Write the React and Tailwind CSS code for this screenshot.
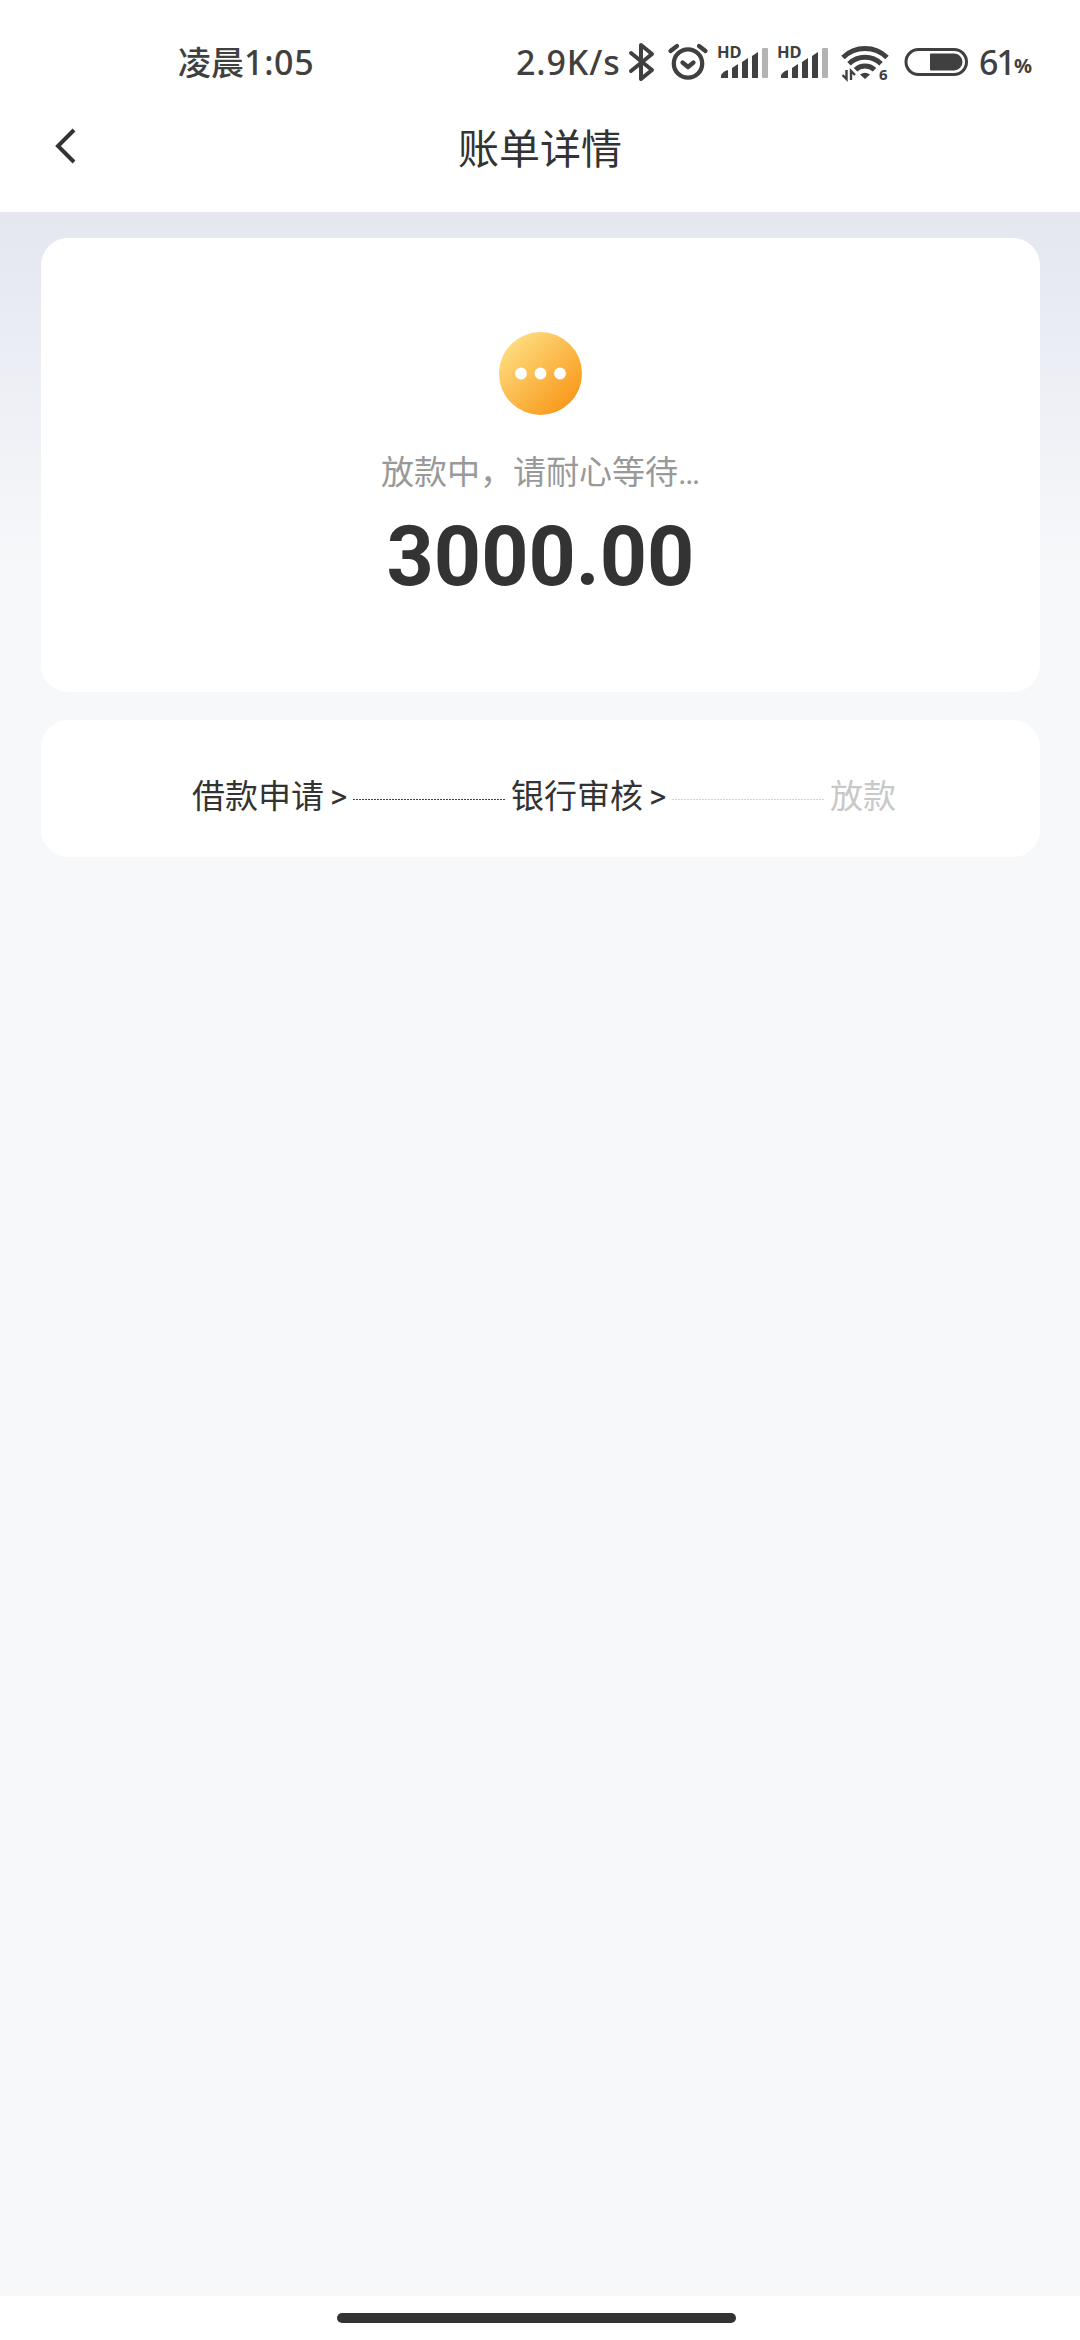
const STEPS = [
  { label: '借款申请', done: true },
  { label: '银行审核', done: true },
  { label: '放款', done: false },
];

export default function App() {
  return (
    <div className="flex h-[2340px] w-[1080px] flex-col overflow-hidden bg-white font-['Roboto','Noto_Sans_CJK_SC',sans-serif] text-[#333]">
      <StatusBar />
      <Header />

      <main className="flex flex-1 flex-col gap-7 bg-[#f7f8fa] bg-[linear-gradient(180deg,#e4e7ee_0px,#e7eaf2_70px,#f7f8fa_360px)] px-[41px] pt-[26px]">
        <section className="flex h-[454px] w-[999px] flex-col items-center rounded-[27px] bg-white pt-[94px]">
          <PendingIcon />
          <p className="mt-[33px] h-[50px] text-[33px] leading-[50px] text-[#999]">放款中，请耐心等待…</p>
          <p className="mt-[11px] h-[96px] text-[82.5px] leading-[96px] font-bold">3000.00</p>
        </section>

        <section className="flex h-[137px] w-[999px] items-center rounded-[27px] bg-white pt-[17px] pl-[151px]">
          {STEPS.map((step, i) => (
            <Step key={step.label} step={step} next={STEPS[i + 1]} />
          ))}
        </section>
      </main>

      {/* Gesture bar */}
      <footer className="flex h-[44px] shrink-0 pt-[17px] pl-[337px]">
        <div className="h-[10px] w-[399px] rounded-full bg-[#333]" />
      </footer>
    </div>
  );
}

function Step({ step, next }) {
  return (
    <>
      <span className={step.done ? 'h-[50px] text-[33px] leading-[50px]' : 'h-[50px] text-[33px] leading-[50px] text-[#c8c8c8]'}>
        {step.label}
      </span>
      {next && (
        <>
          <span className="ml-[6px] h-[50px] w-[18px] text-[33px] leading-[50px]">&gt;</span>
          {/* dashed connector, 2px on / 1px off */}
          <span
            className={
              next.done
                ? 'mt-[4px] mr-[5px] ml-[5px] h-px w-[153px] bg-[repeating-linear-gradient(90deg,#444_0px_2px,#fff_2px_3px)]'
                : 'mt-[4px] mr-[5px] ml-[5px] h-px w-[153px] bg-[repeating-linear-gradient(90deg,#d4d4d4_0px_2px,#fff_2px_3px)]'
            }
          />
        </>
      )}
    </>
  );
}

function Header() {
  return (
    <header className="grid h-[112px] shrink-0 grid-cols-[1fr_auto_1fr] items-start">
      <svg className="mt-[28px] ml-[53px] h-[36px] w-[24px]" viewBox="0 0 24 36" fill="none" stroke="#333" strokeWidth="4">
        <path d="M21 2 5 18l16 16" />
      </svg>
      <h1 className="mt-[20px] h-[60px] text-[41px] leading-[60px]">账单详情</h1>
    </header>
  );
}

function StatusBar() {
  return (
    <div className="flex h-[100px] shrink-0 items-start pl-[178px] font-['Noto_Sans','Noto_Sans_CJK_SC',sans-serif] font-medium text-[#404040]">
      <span className="mt-[38px] flex h-[50px] w-[338px] shrink-0 text-[33px] leading-[50px]">
        凌晨<span className="-mt-px text-[34px] tracking-[0.7px]">1:05</span>
      </span>
      <span className="mt-[37px] h-[50px] w-[111px] shrink-0 text-[34px] leading-[50px] tracking-[0.9px] whitespace-nowrap">2.9K/s</span>
      <svg className="mt-[42px] h-[40px] w-[28px] shrink-0" viewBox="0 0 28 40" fill="none" stroke="#404040" strokeWidth="4" strokeLinejoin="round" strokeLinecap="round">
        <path d="M4 11 25 28 14 37V3l11 9L4 29" />
      </svg>
      <svg className="mt-[42px] ml-[12px] h-[40px] w-[42px] shrink-0" viewBox="0 0 42 40" fill="none" stroke="#404040" strokeWidth="4.300" strokeLinecap="round">
        <circle cx="21" cy="21.500" r="14.200" />
        <path d="m15.500 20.500 5.500 4.500 5.500-4.500" strokeLinejoin="round" />
        <path d="M3.500 9 10 4M38.500 9 32 4" />
      </svg>
      <Signal />
      <Signal />
      <Wifi />
      <Battery />
      <span className="mt-[37px] ml-[10px] h-[50px] w-[35px] text-[34px] leading-[50px] tracking-[-2px]">61</span>
      <span className="mt-[41px] h-[50px] text-[20px] leading-[50px] font-bold">%</span>
    </div>
  );
}

function Signal() {
  return (
    <svg className="mt-[42px] ml-[8px] h-[40px] w-[52px] shrink-0 overflow-visible font-['Noto_Sans',sans-serif]" viewBox="-1 0 52 40" fill="#404040">
      <text x="-1" y="16" fontSize="16.500" fontWeight="700">HD</text>
      <path d="M3 36v-2c0-2 3-5 7-6v8zM14 36V26l6-4v14zM24 36V20l6-4v20zM34 36V14l6-4v26z" />
      <rect x="44" y="6" width="6" height="30" rx="1" fill="#b3b3b3" />
    </svg>
  );
}

function Wifi() {
  return (
    <svg className="mt-[42px] ml-[12px] h-[40px] w-[48px] shrink-0" viewBox="0 0 48 40" fill="none" stroke="#404040">
      <g strokeWidth="5">
        <path d="M2 15.500a31.500 31.500 0 0 1 44 0" />
        <path d="M8 21.800a23 23 0 0 1 32 0" />
        <path d="M14.500 27.700a13.800 13.800 0 0 1 19 0" />
      </g>
      <path d="m24 37-5-4.500q5-3.500 10 0z" fill="#404040" stroke="none" />
      <path d="M5.500 28v9l-4-4M10 38v-9l4 4" strokeWidth="2.400" />
      <text x="38" y="38" fontSize="15" fontWeight="700" fill="#404040" stroke="none">6</text>
    </svg>
  );
}

function Battery() {
  return (
    <svg className="mt-[47px] ml-[15px] h-[30px] w-[65px] shrink-0" viewBox="0 0 65 30" fill="none">
      <rect x="2" y="2.500" width="60.500" height="25" rx="12.500" stroke="#404040" strokeWidth="3" />
      <path d="M27 6.500h23a8.500 8.500 0 0 1 0 17H27q-1 0-1-1v-15q0-1 1-1z" fill="#404040" />
    </svg>
  );
}

function PendingIcon() {
  return (
    <svg className="h-[83px] w-[83px]" viewBox="0 0 83 83">
      <defs>
        <linearGradient id="pending" x1="0.1" y1="0.1" x2="0.85" y2="0.9">
          <stop offset="0" stopColor="#fedf82" />
          <stop offset="1" stopColor="#f9981a" />
        </linearGradient>
      </defs>
      <circle cx="41.500" cy="41.500" r="41.500" fill="url(#pending)" />
      <g fill="#fff">
        <circle cx="22" cy="41.500" r="5.900" />
        <circle cx="41.500" cy="41.500" r="5.900" />
        <circle cx="61" cy="41.500" r="5.900" />
      </g>
    </svg>
  );
}
